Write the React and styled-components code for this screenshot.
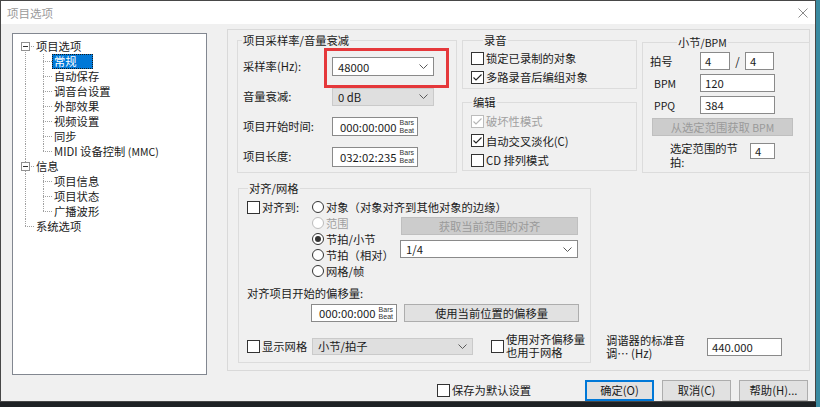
import React from 'react';
import styled, { createGlobalStyle, css } from 'styled-components';

const GlobalStyle = createGlobalStyle`
  html, body { margin: 0; padding: 0; }
  * { box-sizing: border-box; }
  body {
    width: 820px;
    height: 407px;
    overflow: hidden;
    background: linear-gradient(to right, #1e2124 0, #1e2124 816px, #3a8aa0 816px);
    font-family: "Noto Sans CJK SC", "Noto Sans", sans-serif;
    font-size: 11.3px;
    color: #1a1a1a;
  }
`;

const Window = styled.div`
  width: 816px;
  height: 402px;
  background: #f0f0f0;
  border: 1px solid #474747;
  display: flex;
  flex-direction: column;
  overflow: hidden;
`;

const TitleBar = styled.div`
  flex: none;
  height: 23px;
  background: #fff;
  display: flex;
  align-items: center;
  justify-content: space-between;
  padding: 0 7px 0 6px;
  color: #9a9a9a;
  font-size: 11.5px;
`;

const Body = styled.div`
  flex: 1;
  display: flex;
  align-items: flex-start;
  gap: 20px;
  padding-left: 11px;
`;

/* ---------- tree ---------- */
const Tree = styled.div`
  margin-top: 9px;
  width: 195px;
  height: 342px;
  flex: none;
  background: #fff;
  border: 1px solid #828790;
  padding: 5px 0 0 3px;
`;

const TreeRow = styled.div`
  display: flex;
  height: 15px;
  align-items: stretch;
`;

const vdot = 'repeating-linear-gradient(to bottom, #a0a0a0 0 1px, transparent 1px 2px)';
const hdot = 'repeating-linear-gradient(to right, #a0a0a0 0 1px, transparent 1px 2px)';

const Guide = styled.span`
  flex: none;
  width: 18px;
  display: flex;
  align-items: center;
  background-repeat: no-repeat;
  ${({ $v, $h }) => {
    const imgs = [];
    const pos = [];
    const size = [];
    if ($v === 'full') { imgs.push(vdot); pos.push('9px 0'); size.push('1px 100%'); }
    if ($v === 'top') { imgs.push(vdot); pos.push('9px 0'); size.push('1px 8px'); }
    if ($v === 'bottom') { imgs.push(vdot); pos.push('9px 7px'); size.push('1px 8px'); }
    if ($h) { imgs.push(hdot); pos.push('9px 7px'); size.push('9px 1px'); }
    if (!imgs.length) return '';
    return css`
      background-image: ${imgs.join(', ')};
      background-position: ${pos.join(', ')};
      background-size: ${size.join(', ')};
    `;
  }}
`;

const Expander = styled.span`
  margin-left: 5px;
  width: 9px;
  height: 9px;
  border: 1px solid #919191;
  background: #fff;
  display: flex;
  align-items: center;
  justify-content: center;
  &::before {
    content: '';
    width: 5px;
    height: 1px;
    background: #333;
  }
`;

const TreeLabel = styled.span`
  padding: 0 2px;
  line-height: 15px;
  white-space: nowrap;
  ${({ $selected }) => $selected && css`
    background: #0078d7;
    color: #fff;
    outline: 1px dotted #1a1a1a;
    outline-offset: -1px;
    padding-right: 16px;
  `}
`;

const SmallLatin = styled.span`
  font-size: 10.5px;
`;

/* ---------- right side ---------- */
const RightCol = styled.div`
  margin-top: 5px;
  width: 583px;
  flex: none;
  display: flex;
  flex-direction: column;
`;

const Panel = styled.div`
  height: 342px;
  border: 1px solid #d9d9d9;
  padding-left: 9px;
  display: flex;
  flex-direction: column;
`;

const TopRow = styled.div`
  display: flex;
  gap: 5px;
  margin-top: 2px;
  align-items: flex-start;
`;

const Column = styled.div`
  display: flex;
  flex-direction: column;
  gap: 5px;
`;

const Group = styled.fieldset`
  margin: 0;
  margin-top: ${({ $mt }) => $mt || 0}px;
  margin-left: ${({ $ml }) => $ml || 0}px;
  padding: 0;
  min-width: 0;
  flex: none;
  border: 1px solid #dcdcdc;
  width: ${({ $w }) => $w}px;
  height: ${({ $h }) => $h}px;
`;

const Legend = styled.legend`
  margin-left: ${({ $x }) => $x}px;
  padding: 0 1px;
  line-height: 16px;
  height: 16px;
  white-space: nowrap;
`;

const FormGrid = styled.div`
  display: grid;
  grid-template-columns: 89px 102px;
  grid-auto-rows: 19px;
  row-gap: 11px;
  padding: 9px 0 0 5px;
  align-items: center;
`;

const FieldLabel = styled.span`
  line-height: 19px;
  white-space: nowrap;
`;

const SelectBox = styled.div`
  position: relative;
  width: ${({ $w }) => $w}px;
  height: ${({ $h }) => $h || 19}px;
  display: flex;
  align-items: center;
  justify-content: space-between;
  padding: 0 5px 0 5px;
  background: ${({ $disabled }) => ($disabled ? '#dfdfdf' : '#fff')};
  border: 1px solid ${({ $disabled }) => ($disabled ? '#cacaca' : '#8a8a8a')};
  color: #1a1a1a;
  ${({ $mark }) => $mark && css`
    &::after {
      content: '';
      position: absolute;
      left: -9px;
      top: -10px;
      right: -16px;
      bottom: -13px;
      border: 3px solid #e5383b;
      pointer-events: none;
    }
  `}
`;

const TimeBox = styled.div`
  width: 86px;
  height: ${({ $h }) => $h || 19}px;
  flex: none;
  background: #fff;
  border: 1px solid #8a8a8a;
  display: flex;
  align-items: center;
  justify-content: space-between;
  padding: 0 3px 0 7px;
  white-space: nowrap;
`;

const BarsBeat = styled.span`
  display: flex;
  flex-direction: column;
  font-family: "Liberation Sans", sans-serif;
  font-size: 7px;
  line-height: 7.5px;
  color: #333;
`;

const ChecksBody = styled.div`
  display: flex;
  flex-direction: column;
  gap: ${({ $gap }) => $gap}px;
  padding: ${({ $pt }) => $pt}px 0 0 ${({ $pl }) => $pl}px;
`;

const CheckRow = styled.div`
  display: flex;
  align-items: center;
  gap: 2px;
  height: 16px;
  flex: none;
  width: ${({ $w }) => ($w ? `${$w}px` : 'auto')};
  white-space: nowrap;
  color: ${({ $disabled }) => ($disabled ? '#a0a0a0' : 'inherit')};
`;

const Box = styled.span`
  width: 13px;
  height: 13px;
  flex: none;
  border: 1px solid ${({ $disabled }) => ($disabled ? '#bcbcbc' : '#333')};
  background: #fff;
  display: flex;
  align-items: center;
  justify-content: center;
`;

const Circle = styled.span`
  width: 12px;
  height: 12px;
  flex: none;
  border-radius: 50%;
  border: 1px solid ${({ $disabled }) => ($disabled ? '#bcbcbc' : '#333')};
  background: #fff;
  display: flex;
  align-items: center;
  justify-content: center;
`;

const Dot = styled.span`
  width: 6px;
  height: 6px;
  border-radius: 50%;
  background: #333;
`;

const Button = styled.div`
  flex: none;
  width: ${({ $w }) => $w}px;
  height: ${({ $h }) => $h || 18}px;
  margin-left: ${({ $ml }) => $ml || 0}px;
  display: flex;
  align-items: center;
  justify-content: center;
  white-space: nowrap;
  background: ${({ $disabled }) => ($disabled ? '#cccccc' : '#e1e1e1')};
  border: 1px solid ${({ $disabled, $default }) => ($disabled ? '#bfbfbf' : $default ? '#0078d7' : '#adadad')};
  color: ${({ $disabled }) => ($disabled ? '#9a9a9a' : 'inherit')};
  ${({ $default }) => $default && css`box-shadow: inset 0 0 0 1px #0078d7;`}
`;

const Input = styled.div`
  flex: none;
  width: ${({ $w }) => $w}px;
  height: ${({ $h }) => $h || 18}px;
  margin-top: ${({ $mt }) => $mt || 0}px;
  background: #fff;
  border: 1px solid #8a8a8a;
  padding-left: 4px;
  display: flex;
  align-items: center;
`;

/* BPM group */
const BpmBody = styled.div`
  display: flex;
  flex-direction: column;
  padding: 2px 0 0 7px;
`;

const BpmRow = styled.div`
  display: flex;
  align-items: center;
  height: 18px;
  margin-top: ${({ $mt }) => $mt || 0}px;
`;

const BpmLabel = styled.span`
  width: 50px;
  flex: none;
  padding-left: ${({ $indent }) => $indent || 0}px;
  font-size: ${({ $small }) => ($small ? '10.5px' : 'inherit')};
`;

const Slash = styled.span`
  width: 15px;
  text-align: center;
`;

const RangeRow = styled.div`
  display: flex;
  align-items: flex-start;
  margin-top: 5px;
`;

/* align group */
const AlignBody = styled.div`
  display: flex;
  flex-direction: column;
  padding: 3px 0 0 8px;
`;

const Row = styled.div`
  display: flex;
  align-items: center;
  height: ${({ $h }) => ($h ? `${$h}px` : 'auto')};
  margin-top: ${({ $mt }) => $mt || 0}px;
  margin-left: ${({ $ml }) => $ml || 0}px;
  gap: ${({ $gap }) => $gap || 0}px;
`;

const SubArea = styled.div`
  display: flex;
  margin-left: 65px;
`;

const RadioCol = styled.div`
  width: 88px;
  flex: none;
  display: flex;
  flex-direction: column;
`;

const SideCol = styled.div`
  display: flex;
  flex-direction: column;
  padding-top: 2px;
  gap: 5px;
`;

const LineLabel = styled.div`
  line-height: 16px;
  margin-top: ${({ $mt }) => $mt || 0}px;
`;

const Lines = styled.div`
  flex: none;
  width: ${({ $w }) => ($w ? `${$w}px` : 'auto')};
  padding-left: ${({ $pl }) => $pl || 0}px;
  display: flex;
  flex-direction: column;
  white-space: nowrap;
`;

const Line = styled.div`
  height: ${({ $lh }) => $lh}px;
  line-height: ${({ $lh }) => $lh}px;
`;

const BottomRow = styled.div`
  display: flex;
  align-items: flex-end;
  margin-top: 7px;
`;

const Tuner = styled.div`
  display: flex;
  align-items: center;
  margin-left: 15px;
  margin-bottom: 3px;
`;

const Footer = styled.div`
  display: flex;
  align-items: center;
  margin-top: 9px;
  height: 20px;
  padding: 0 2px 0 210px;
`;

const Buttons = styled.div`
  margin-left: auto;
  display: flex;
  gap: 8px;
`;

/* ---------- small drawings ---------- */
const Chevron = () => (
  <svg width="9" height="5" viewBox="0 0 9 5">
    <polyline points="0.5,0.5 4.5,4.5 8.5,0.5" fill="none" stroke="#5a5a5a" strokeWidth="1" />
  </svg>
);

const CloseIcon = () => (
  <svg width="10" height="10" viewBox="0 0 10 10">
    <path d="M0.5 0.5 L9.5 9.5 M9.5 0.5 L0.5 9.5" stroke="#8a8a8a" strokeWidth="1" fill="none" />
  </svg>
);

const CheckMark = ({ color }) => (
  <svg width="11" height="11" viewBox="0 0 11 11">
    <polyline points="1.5,5.5 4,8 9.5,2.5" fill="none" stroke={color} strokeWidth="1.1" />
  </svg>
);

const Checkbox = ({ checked, disabled, children, w }) => (
  <CheckRow $disabled={disabled} $w={w}>
    <Box $disabled={disabled}>{checked && <CheckMark color={disabled ? '#b5b5b5' : '#222'} />}</Box>
    {children}
  </CheckRow>
);

const Radio = ({ checked, disabled, children }) => (
  <CheckRow $disabled={disabled}>
    <Circle $disabled={disabled}>{checked && <Dot />}</Circle>
    {children}
  </CheckRow>
);

const Bars = () => (
  <BarsBeat>
    <span>Bars</span>
    <span>Beat</span>
  </BarsBeat>
);

const Select = ({ value, w, h, disabled, mark }) => (
  <SelectBox $w={w} $h={h} $disabled={disabled} $mark={mark}>
    <span>{value}</span>
    <Chevron />
  </SelectBox>
);

const MultiLine = ({ lines, lh, w, pl }) => (
  <Lines $w={w} $pl={pl}>
    {lines.map((l, i) => (
      <Line key={i} $lh={lh}>{l}</Line>
    ))}
  </Lines>
);

const treeItems = [
  { label: '项目选项', guides: [{ v: 'bottom', h: true, exp: true }] },
  { label: '常规', guides: [{ v: 'full' }, { v: 'full', h: true }], selected: true },
  { label: '自动保存', guides: [{ v: 'full' }, { v: 'full', h: true }] },
  { label: '调音台设置', guides: [{ v: 'full' }, { v: 'full', h: true }] },
  { label: '外部效果', guides: [{ v: 'full' }, { v: 'full', h: true }] },
  { label: '视频设置', guides: [{ v: 'full' }, { v: 'full', h: true }] },
  { label: '同步', guides: [{ v: 'full' }, { v: 'full', h: true }] },
  { label: <>MIDI 设备控制 <SmallLatin>(MMC)</SmallLatin></>, guides: [{ v: 'full' }, { v: 'top', h: true }] },
  { label: '信息', guides: [{ v: 'full', h: true, exp: true }] },
  { label: '项目信息', guides: [{ v: 'full' }, { v: 'full', h: true }] },
  { label: '项目状态', guides: [{ v: 'full' }, { v: 'full', h: true }] },
  { label: '广播波形', guides: [{ v: 'full' }, { v: 'top', h: true }] },
  { label: '系统选项', guides: [{ v: 'top', h: true }] },
];

export default function App() {
  return (
    <>
      <GlobalStyle />
      <Window>
        <TitleBar>
          <span>项目选项</span>
          <CloseIcon />
        </TitleBar>
        <Body>
          <Tree>
            {treeItems.map((it, i) => (
              <TreeRow key={i}>
                {it.guides.map((g, j) => (
                  <Guide key={j} $v={g.v} $h={g.h}>
                    {g.exp && <Expander />}
                  </Guide>
                ))}
                <TreeLabel $selected={it.selected}>{it.label}</TreeLabel>
              </TreeRow>
            ))}
          </Tree>

          <RightCol>
            <Panel>
              <TopRow>
                <Group $w={220} $h={141}>
                  <Legend $x={4}>项目采样率/音量衰减</Legend>
                  <FormGrid>
                    <FieldLabel>采样率(Hz):</FieldLabel>
                    <Select value="48000" w={102} mark />
                    <FieldLabel>音量衰减:</FieldLabel>
                    <Select value="0 dB" w={102} h={18} disabled />
                    <FieldLabel>项目开始时间:</FieldLabel>
                    <TimeBox>
                      <span>000:00:000</span>
                      <Bars />
                    </TimeBox>
                    <FieldLabel>项目长度:</FieldLabel>
                    <TimeBox $h={20}>
                      <span>032:02:235</span>
                      <Bars />
                    </TimeBox>
                  </FormGrid>
                </Group>

                <Column>
                  <Group $w={175} $h={57}>
                    <Legend $x={20}>录音</Legend>
                    <ChecksBody $pt={2} $pl={8} $gap={3}>
                      <Checkbox>锁定已录制的对象</Checkbox>
                      <Checkbox checked>多路录音后编组对象</Checkbox>
                    </ChecksBody>
                  </Group>
                  <Group $w={175} $h={77}>
                    <Legend $x={9}>编辑</Legend>
                    <ChecksBody $pt={3} $pl={8} $gap={3.5}>
                      <Checkbox checked disabled>破坏性模式</Checkbox>
                      <Checkbox checked>自动交叉淡化(C)</Checkbox>
                      <Checkbox>CD 排列模式</Checkbox>
                    </ChecksBody>
                  </Group>
                </Column>

                <Group $w={168} $h={139} $mt={2}>
                  <Legend $x={34}>小节<SmallLatin>/BPM</SmallLatin></Legend>
                  <BpmBody>
                    <BpmRow>
                      <BpmLabel>拍号</BpmLabel>
                      <Input $w={30}>4</Input>
                      <Slash>/</Slash>
                      <Input $w={29}>4</Input>
                    </BpmRow>
                    <BpmRow $mt={4}>
                      <BpmLabel $indent={4} $small>BPM</BpmLabel>
                      <Input $w={75}>120</Input>
                    </BpmRow>
                    <BpmRow $mt={4}>
                      <BpmLabel $indent={4} $small>PPQ</BpmLabel>
                      <Input $w={75}>384</Input>
                    </BpmRow>
                    <BpmRow $mt={4}>
                      <Button $w={141} $ml={2} $disabled>从选定范围获取 <SmallLatin>&nbsp;BPM</SmallLatin></Button>
                    </BpmRow>
                    <RangeRow>
                      <MultiLine lines={['选定范围的节', '拍:']} lh={14} w={100} pl={20} />
                      <Input $w={25} $h={16} $mt={2}>4</Input>
                    </RangeRow>
                  </BpmBody>
                </Group>
              </TopRow>

              <BottomRow>
                <Group $w={353} $h={183} $ml={1}>
                  <Legend $x={9}>对齐/网格</Legend>
                  <AlignBody>
                    <Row $h={16}>
                      <Checkbox w={65}>对齐到:</Checkbox>
                      <Radio>对象（对象对齐到其他对象的边缘）</Radio>
                    </Row>
                    <SubArea>
                      <RadioCol>
                        <Radio disabled>范围</Radio>
                        <Radio checked>节拍/小节</Radio>
                        <Radio>节拍（相对）</Radio>
                        <Radio>网格/帧</Radio>
                      </RadioCol>
                      <SideCol>
                        <Button $w={177} $ml={1} $disabled>获取当前范围的对齐</Button>
                        <Select value="1/4" w={178} h={18} />
                      </SideCol>
                    </SubArea>
                    <LineLabel $mt={6}>对齐项目开始的偏移量:</LineLabel>
                    <Row $mt={3} $ml={64} $gap={7}>
                      <TimeBox $h={18}>
                        <span>000:00:000</span>
                        <Bars />
                      </TimeBox>
                      <Button $w={175}>使用当前位置的偏移量</Button>
                    </Row>
                    <Row $mt={11} $h={26} $gap={0}>
                      <Checkbox w={65}>显示网格</Checkbox>
                      <Select value="小节/拍子" w={161} h={17} disabled />
                      <Row $ml={18} $gap={2}>
                        <Box />
                        <MultiLine lines={['使用对齐偏移量', '也用于网格']} lh={13} />
                      </Row>
                    </Row>
                  </AlignBody>
                </Group>
                <Tuner>
                  <MultiLine lines={['调谐器的标准音', '调… (Hz)']} lh={13} w={101} />
                  <Input $w={75}>440.000</Input>
                </Tuner>
              </BottomRow>
            </Panel>

            <Footer>
              <Checkbox>保存为默认设置</Checkbox>
              <Buttons>
                <Button $w={69} $h={21} $default>确定(O)</Button>
                <Button $w={69} $h={21}>取消(C)</Button>
                <Button $w={69} $h={21}>帮助(H)...</Button>
              </Buttons>
            </Footer>
          </RightCol>
        </Body>
      </Window>
    </>
  );
}
